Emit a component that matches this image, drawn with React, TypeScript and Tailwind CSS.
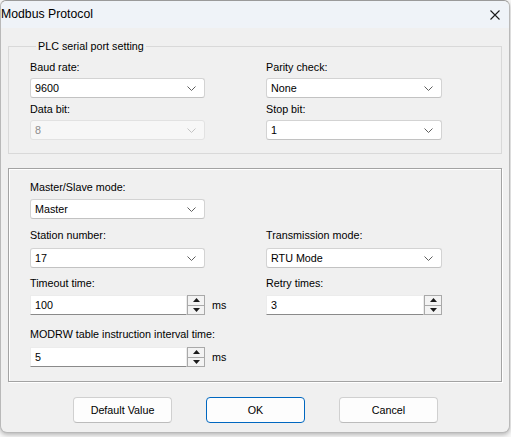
import React from "react";

const FONT = "font-['Liberation_Sans',Arial,sans-serif]";

function Chevron({ muted }: { muted?: boolean }) {
  return (
    <svg width="9" height="5" viewBox="0 0 9 5" className="shrink-0">
      <path
        d="M0.5 0.5 L4.5 4.5 L8.5 0.5"
        fill="none"
        stroke={muted ? "#c4c4c4" : "#5f5f5f"}
        strokeWidth="1"
      />
    </svg>
  );
}

function Combo({ value, disabled }: { value: string; disabled?: boolean }) {
  return (
    <div
      className={
        disabled
          ? "h-[20px] flex items-center justify-between pl-[4px] pr-[8px] bg-[#f7f7f7] border border-[#e2e2e2] rounded-[3px] text-[#8c8c8c]"
          : "h-[20px] flex items-center justify-between pl-[4px] pr-[8px] bg-white border border-[#d3d3d3] border-b-[#c2c2c2] rounded-[3px] text-black"
      }
    >
      <span className="leading-none">{value}</span>
      <Chevron muted={disabled} />
    </div>
  );
}

function Arrow({ up }: { up?: boolean }) {
  return (
    <svg width="7" height="4" viewBox="0 0 7 4">
      <path d={up ? "M0 4 L3.5 0 L7 4 Z" : "M0 0 L3.5 4 L7 0 Z"} fill="#1a1a1a" />
    </svg>
  );
}

function Spin({ value }: { value: string }) {
  return (
    <div className="h-[20px] flex">
      <div className="flex-1 flex items-center pl-[4px] bg-white border border-[#ececec] border-b-[#8a8a8a] leading-none">
        {value}
      </div>
      <div className="w-[18px] flex flex-col border border-[#a9a9a9] bg-[#f3f3f3]">
        <div className="flex-1 flex items-center justify-center border-b border-[#a9a9a9]">
          <Arrow up />
        </div>
        <div className="flex-1 flex items-center justify-center">
          <Arrow />
        </div>
      </div>
    </div>
  );
}

function Label({ children }: { children: React.ReactNode }) {
  return <div className="h-[16px] leading-[16px] whitespace-nowrap">{children}</div>;
}

function Button({ children, primary }: { children: React.ReactNode; primary?: boolean }) {
  return (
    <button
      className={
        primary
          ? "w-[99px] h-[26px] rounded-[4px] bg-[#fdfdfd] border border-[#0067c0] text-black"
          : "w-[99px] h-[26px] rounded-[4px] bg-[#fdfdfd] border border-[#d0d0d0] border-b-[#bcbcbc] text-black"
      }
    >
      {children}
    </button>
  );
}

export default function App() {
  return (
    <div className={`w-[511px] h-[437px] bg-[#f7f7f7] overflow-hidden text-[10.75px] text-black ${FONT}`}>
      <div className="w-[510px] h-[433px] bg-[#f0f0f0] border border-[#b9b9b9] border-t-[#9a9a9a] rounded-t-[6px] rounded-b-[7px] shadow-[0_2px_4px_rgba(0,0,0,0.25)] flex flex-col">
        {/* caption bar */}
        <div className="h-[27px] shrink-0 bg-[#eff3f8] rounded-t-[6px] flex items-center justify-between pr-[8px]">
          <span className="text-[12.25px] leading-none">Modbus Protocol</span>
          <svg width="10" height="10" viewBox="0 0 10 10" className="mr-[1px]">
            <path d="M0.5 0.5 L9.5 9.5 M9.5 0.5 L0.5 9.5" stroke="#1a1a1a" strokeWidth="1.1" />
          </svg>
        </div>

        <div className="px-[7px] pt-[10px] flex flex-col">
          {/* serial port settings */}
          <fieldset className="border border-[#d9d9d9] h-[116px] pl-[21px] pb-[12px]">
            <legend className="ml-[6px] px-[2px] leading-[16px] h-[16px]">PLC serial port setting</legend>
            <div className="grid grid-cols-[175px_176px] gap-x-[61px] mt-[5px]">
              <div className="flex flex-col">
                <Label>Baud rate:</Label>
                <div className="mt-[3px]">
                  <Combo value="9600" />
                </div>
                <div className="mt-[3px]">
                  <Label>Data bit:</Label>
                </div>
                <div className="mt-[3px]">
                  <Combo value="8" disabled />
                </div>
              </div>
              <div className="flex flex-col">
                <Label>Parity check:</Label>
                <div className="mt-[3px]">
                  <Combo value="None" />
                </div>
                <div className="mt-[3px]">
                  <Label>Stop bit:</Label>
                </div>
                <div className="mt-[3px]">
                  <Combo value="1" />
                </div>
              </div>
            </div>
          </fieldset>

          {/* communication settings */}
          <div className="mt-[14px] h-[214px] border border-[#a3a3a3] shadow-[inset_1px_1px_0_#ffffff,1px_1px_0_#ffffff] pl-[21px] pt-[10px]">
            <Label>Master/Slave mode:</Label>
            <div className="mt-[4px] w-[175px]">
              <Combo value="Master" />
            </div>
            <div className="grid grid-cols-[175px_176px] gap-x-[61px] mt-[8px]">
              <Label>Station number:</Label>
              <Label>Transmission mode:</Label>
            </div>
            <div className="grid grid-cols-[175px_176px] gap-x-[61px] mt-[5px]">
              <Combo value="17" />
              <Combo value="RTU Mode" />
            </div>
            <div className="grid grid-cols-[175px_176px] gap-x-[61px] mt-[7px]">
              <Label>Timeout time:</Label>
              <Label>Retry times:</Label>
            </div>
            <div className="grid grid-cols-[175px_176px] gap-x-[61px] mt-[4px]">
              <div className="relative">
                <Spin value="100" />
                <span className="absolute left-[182px] top-0 h-[20px] flex items-center">ms</span>
              </div>
              <Spin value="3" />
            </div>
            <div className="mt-[11px]">
              <Label>MODRW table instruction interval time:</Label>
            </div>
            <div className="mt-[5px] w-[175px] relative">
              <Spin value="5" />
              <span className="absolute left-[182px] top-0 h-[20px] flex items-center">ms</span>
            </div>
          </div>

          {/* dialog buttons */}
          <div className="mt-[15px] flex justify-center gap-[34px] pl-[1px]">
            <Button>Default Value</Button>
            <Button primary>OK</Button>
            <Button>Cancel</Button>
          </div>
        </div>
      </div>
    </div>
  );
}
